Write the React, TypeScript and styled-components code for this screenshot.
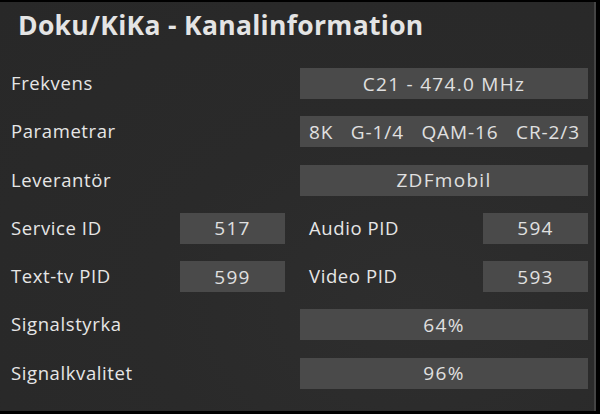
import React from 'react';
import styled, { createGlobalStyle } from 'styled-components';

const GlobalStyle = createGlobalStyle`
  html, body {
    margin: 0;
    padding: 0;
    background: #000;
  }
  body {
    width: 600px;
    height: 414px;
    overflow: hidden;
    font-family: "Open Sans", "DejaVu Sans", sans-serif;
  }
`;

const Screen = styled.div`
  width: 600px;
  height: 414px;
  background: #000;
  padding: 2px 4px 3px 0;
  box-sizing: border-box;
`;

const Panel = styled.div`
  height: 100%;
  box-sizing: border-box;
  background: radial-gradient(ellipse at 70% 75%, #2e2e2e 0%, #2a2a2a 45%, #282828 100%);
  border-right: 2px solid #444;
  padding: 0 6px 0 11px;
  display: flex;
  flex-direction: column;
`;

const Title = styled.h1`
  margin: 0;
  padding: 5px 0 0 7px;
  height: 66px;
  box-sizing: border-box;
  font-size: 26.5px;
  font-weight: 700;
  color: #e4e4e4;
  letter-spacing: 0.3px;
`;

const Rows = styled.div`
  display: flex;
  flex-direction: column;
  gap: 17.3px;
`;

const Row = styled.div`
  display: flex;
  align-items: center;
  height: 31px;
`;

const Label = styled.span<{ $indent?: boolean; $fixed?: boolean }>`
  flex: ${({ $fixed }) => ($fixed ? '0 0 169px' : '1')};
  font-size: 18.5px;
  letter-spacing: 0.6px;
  color: #e6e6e6;
  margin-left: ${({ $indent }) => ($indent ? '24px' : '0')};
  position: relative;
  top: -1px;
`;

const Box = styled.div<{ $small?: boolean }>`
  width: ${({ $small }) => ($small ? '105px' : '288px')};
  height: 31px;
  background: #4a4a4a;
  color: #e0e0e0;
  font-size: 19px;
  letter-spacing: 1.3px;
  display: flex;
  align-items: center;
  justify-content: center;
`;

const Params = styled(Box)`
  justify-content: space-between;
  padding: 0 8px 0 9px;
  box-sizing: border-box;
  letter-spacing: 0.9px;
`;

export default function App() {
  return (
    <Screen>
      <GlobalStyle />
      <Panel>
        <Title>Doku/KiKa - Kanalinformation</Title>
        <Rows>
          <Row>
            <Label>Frekvens</Label>
            <Box>C21 - 474.0 MHz</Box>
          </Row>
          <Row>
            <Label>Parametrar</Label>
            <Params>
              <span>8K</span>
              <span>G-1/4</span>
              <span>QAM-16</span>
              <span>CR-2/3</span>
            </Params>
          </Row>
          <Row>
            <Label>Leverantör</Label>
            <Box>ZDFmobil</Box>
          </Row>
          <Row>
            <Label $fixed>Service ID</Label>
            <Box $small>517</Box>
            <Label $indent>Audio PID</Label>
            <Box $small>594</Box>
          </Row>
          <Row>
            <Label $fixed>Text-tv PID</Label>
            <Box $small>599</Box>
            <Label $indent>Video PID</Label>
            <Box $small>593</Box>
          </Row>
          <Row>
            <Label>Signalstyrka</Label>
            <Box>64%</Box>
          </Row>
          <Row>
            <Label>Signalkvalitet</Label>
            <Box>96%</Box>
          </Row>
        </Rows>
      </Panel>
    </Screen>
  );
}
